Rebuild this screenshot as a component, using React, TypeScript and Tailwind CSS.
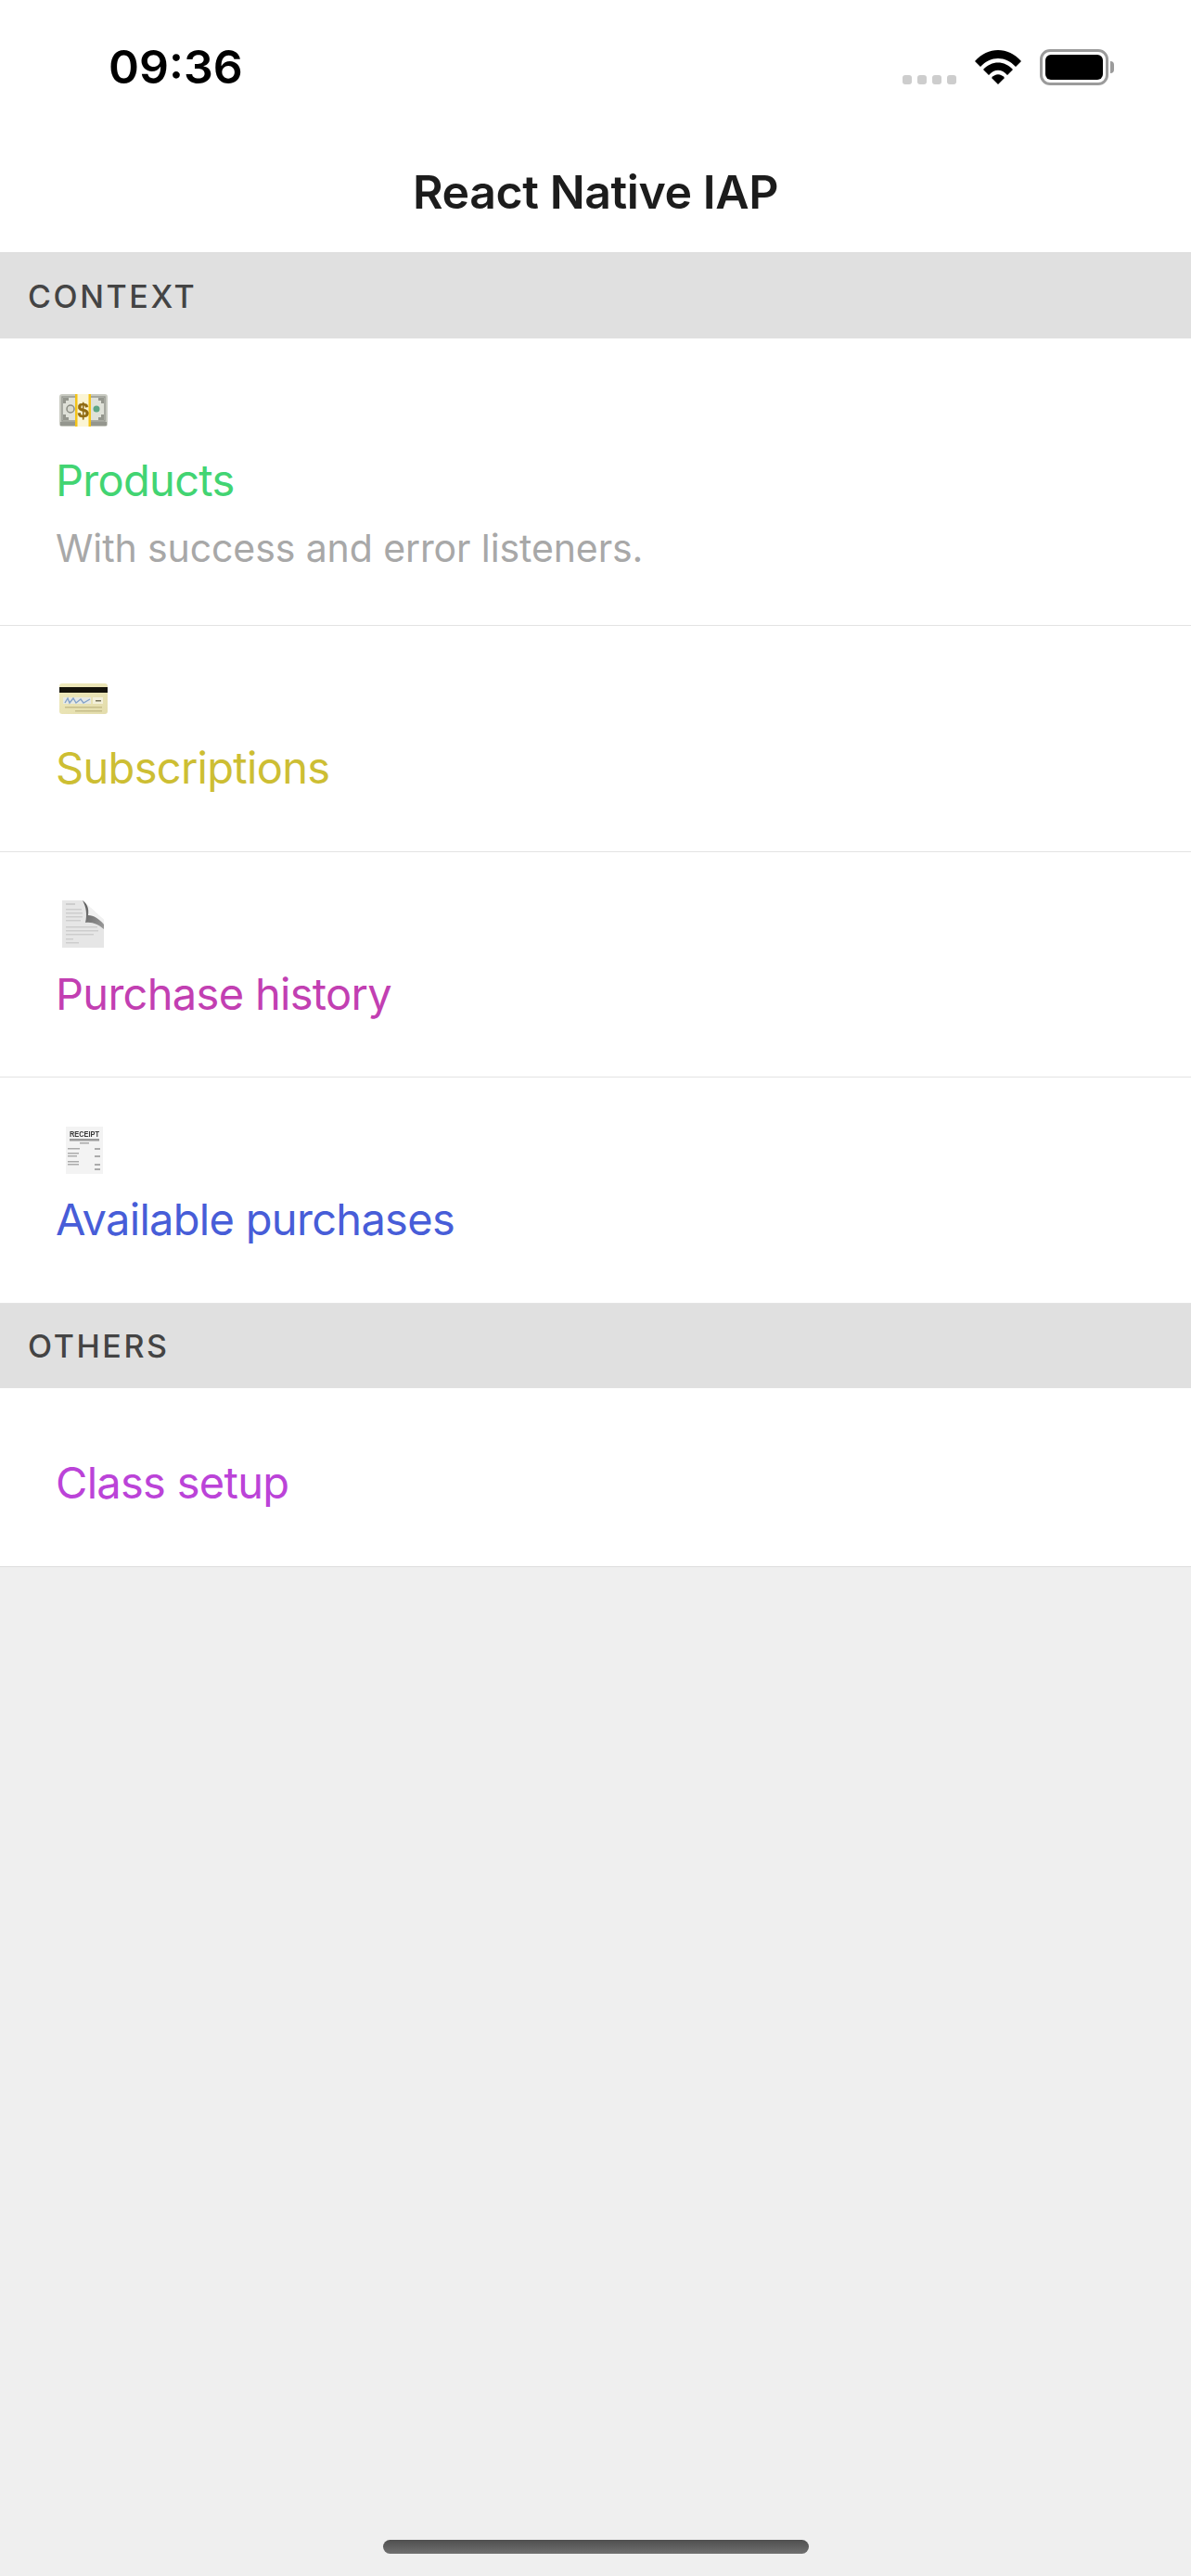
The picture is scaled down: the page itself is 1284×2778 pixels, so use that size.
import React from "react";

const MoneyIcon = () => (
  <svg width="52" height="35" viewBox="0 0 52 35" className="ml-[4px] blur-[0.4px]">
    <rect x="0" y="0" width="52" height="35" rx="3" fill="#c8cac1" />
    <rect x="1" y="30" width="50" height="4" fill="#94968e" />
    <rect x="3" y="3" width="46" height="26" fill="#dfe1d8" stroke="#979991" strokeWidth="1.5" />
    <path d="M4 4 H10 V7 H7 V10 H4 Z M48 4 H42 V7 H45 V10 H48 Z M4 28 H10 V25 H7 V22 H4 Z M48 28 H42 V25 H45 V22 H48 Z" fill="#94968d" />
    <circle cx="12" cy="16" r="4" fill="#d8dad0" stroke="#8a8c82" strokeWidth="1.5" />
    <circle cx="40" cy="16" r="3.5" fill="#5fa585" />
    <rect x="17" y="0" width="17" height="35" fill="#fbf5d5" />
    <rect x="17" y="0" width="2.5" height="35" fill="#f3c317" />
    <rect x="31.5" y="0" width="2.5" height="35" fill="#f3c317" />
    <text x="25.5" y="25" textAnchor="middle" fontSize="22" fontWeight="700" fill="#8f6a12" stroke="#8f6a12" strokeWidth="0.4" fontFamily="Liberation Sans, sans-serif">$</text>
  </svg>
);

const CardIcon = () => (
  <svg width="52" height="33" viewBox="0 0 52 33" className="ml-[4px] blur-[0.4px]">
    <defs>
      <linearGradient id="cardGold" x1="0" y1="0" x2="1" y2="1">
        <stop offset="0" stopColor="#efeabc" />
        <stop offset="1" stopColor="#e3dcac" />
      </linearGradient>
    </defs>
    <rect x="0" y="0" width="52" height="33" rx="3" fill="url(#cardGold)" />
    <rect x="0" y="4" width="52" height="6" fill="#15130a" />
    <rect x="4" y="15" width="30" height="7" fill="#e6e9e4" />
    <path d="M6 21 L9 16 L11 21 L15 16 L18 21 L23 17 L26 21 L33 17" fill="none" stroke="#86a4ca" strokeWidth="1.4" />
    <rect x="36" y="15" width="11" height="7" fill="#f3f0da" />
    <rect x="39" y="18" width="6" height="1.5" fill="#77735a" />
    <rect x="6" y="25" width="40" height="1.5" fill="#c6bd8a" />
    <rect x="17" y="29" width="29" height="1.5" fill="#c6bd8a" />
  </svg>
);

const DocIcon = () => (
  <svg width="45" height="51" viewBox="0 0 45 51" className="ml-[7px] blur-[0.5px]">
    <defs>
      <linearGradient id="docFold" x1="0" y1="0" x2="1" y2="1">
        <stop offset="0" stopColor="#555555" />
        <stop offset="1" stopColor="#9c9c9c" />
      </linearGradient>
    </defs>
    <path d="M0 0 H22 L45 21 V51 H0 Z" fill="#e6e6e6" />
    <path d="M22 0 L45 21 V25 C38 18 33 18 27 18 C27 10 25 5 22 0 Z" fill="#f1f1f1" />
    <path d="M22 0 C27 4 29 8 28 16 C34 16 40 20 45 26 V31 C39 26 33 23 25 24 C27 15 26 7 22 0 Z" fill="url(#docFold)" />
    <g fill="#cdcdcd">
      <rect x="4" y="3" width="10" height="2" />
      <rect x="4" y="9" width="17" height="1.5" />
      <rect x="4" y="13" width="18" height="1.5" />
      <rect x="4" y="17" width="18" height="1.5" />
      <rect x="4" y="21" width="16" height="1.5" />
      <rect x="4" y="28" width="34" height="1.5" />
      <rect x="4" y="32" width="35" height="1.5" />
      <rect x="4" y="36" width="30" height="1.5" />
      <rect x="4" y="41" width="8" height="1.5" />
      <rect x="4" y="45" width="14" height="1.5" />
    </g>
  </svg>
);

const ReceiptIcon = () => (
  <svg width="40" height="51" viewBox="0 0 40 51" className="ml-[11px] blur-[0.4px]">
    <rect x="0" y="0" width="40" height="51" fill="#f3f3f3" />
    <text transform="translate(4 11) scale(1 1.25)" fontSize="7.4" fontWeight="700" fill="#3a3a3a" fontFamily="Liberation Sans, sans-serif">RECEIPT</text>
    <rect x="4" y="13" width="32" height="2.5" fill="#9a9a9a" />
    <rect x="15" y="17" width="10" height="1.5" fill="#a8a8a8" />
    <g fill="#ababab">
      <rect x="2" y="23" width="13" height="1.5" />
      <rect x="31" y="23" width="6" height="2" />
      <rect x="2" y="28" width="12" height="1.5" />
      <rect x="2" y="31" width="10" height="1.5" />
      <rect x="31" y="31" width="6" height="2" />
      <rect x="2" y="37" width="12" height="1.5" />
      <rect x="2" y="40" width="12" height="1.5" />
      <rect x="31" y="40" width="6" height="2" />
      <rect x="31" y="45" width="6" height="2" />
    </g>
  </svg>
);

const items = [
  { title: "Products", note: "With success and error listeners.", color: "text-[#42d472]", icon: <MoneyIcon /> },
  { title: "Subscriptions", color: "text-[#cdbe33]", icon: <CardIcon /> },
  { title: "Purchase history", color: "text-[#c23fb2]", icon: <DocIcon /> },
  { title: "Available purchases", color: "text-[#475dd8]", icon: <ReceiptIcon /> },
];

const SectionHeader = ({ label }: { label: string }) => (
  <div className="h-[91.5px] flex items-center pl-[30px] pt-[1px] bg-[#e0e0e0] text-[#444444] text-[34px] font-medium tracking-[2.6px]">
    {label}
  </div>
);

const App = () => {
  return (
    <div className="flex flex-col min-h-[2778px] bg-[#efefef] font-['Inter',sans-serif]">
      <div className="bg-white border-b border-[#dcdcdc] h-[273px]">
        <div className="flex items-start justify-between h-[145px] pl-[117px] pr-[83px]">
          <span className="mt-[42px] text-[50px] leading-[60px] font-semibold text-black">09:36</span>
          <div className="flex items-end gap-[20px] mt-[53px]">
            <div className="flex gap-[6px] mb-[1px]">
              <span className="w-[10px] h-[10px] rounded-[3px] bg-[#cdcdcd]" />
              <span className="w-[10px] h-[10px] rounded-[3px] bg-[#cdcdcd]" />
              <span className="w-[10px] h-[10px] rounded-[3px] bg-[#cdcdcd]" />
              <span className="w-[10px] h-[10px] rounded-[3px] bg-[#cdcdcd]" />
            </div>
            <svg width="50" height="38" viewBox="0 0 50 38" className="mb-[1px]">
              <path d="M0 13 C14 -3 36 -3 50 13 L44 19 C33 7 17 7 6 19 Z" fill="#000" />
              <path d="M9 22 C18 12 32 12 41 22 L35 28 C29 21 21 21 15 28 Z" fill="#000" />
              <path d="M18 31 C22 26 28 26 32 31 L25 38 Z" fill="#000" />
            </svg>
            <div className="flex items-center">
              <div className="w-[74px] h-[39px] rounded-[11px] border-[3px] border-[#9b9b9b] p-[3px]">
                <div className="w-full h-full rounded-[6px] bg-black" />
              </div>
              <span className="w-[4px] h-[13px] ml-[2px] rounded-r-[4px] bg-[#9b9b9b]" />
            </div>
          </div>
        </div>
        <div className="text-center text-[50px] leading-[60px] font-semibold text-[#1c1c1c] tracking-[-0.4px] mt-[32px]">React Native IAP</div>
      </div>

      <SectionHeader label="CONTEXT" />
      {items.map((item) => (
        <div key={item.title} className="bg-white border-b border-[#e3e3e3] pl-[60px] pt-[45px] pb-[48.5px]">
          <div className="h-[66px] flex items-center">{item.icon}</div>
          <div className={`h-[83px] flex items-end text-[47px] leading-[82px] tracking-[-0.7px] ${item.color}`}>{item.title}</div>
          {item.note && <div className="h-[67px] flex items-center text-[41px] tracking-[-0.1px] text-[#a8a8a8]">{item.note}</div>}
        </div>
      ))}

      <SectionHeader label="OTHERS" />
      <div className="bg-white border-b border-[#dedede] pl-[60px] pt-[61px] pb-[49px]">
        <div className="h-[82px] flex items-center text-[47px] tracking-[-0.7px] text-[#bb43d8]">Class setup</div>
      </div>

      <div className="flex-1 flex flex-col justify-end items-center pb-[24px]">
        <div className="w-[459px] h-[15px] rounded-full bg-gradient-to-b from-[#4f4f4f] to-[#707070]" />
      </div>
    </div>
  );
};

export default App;
